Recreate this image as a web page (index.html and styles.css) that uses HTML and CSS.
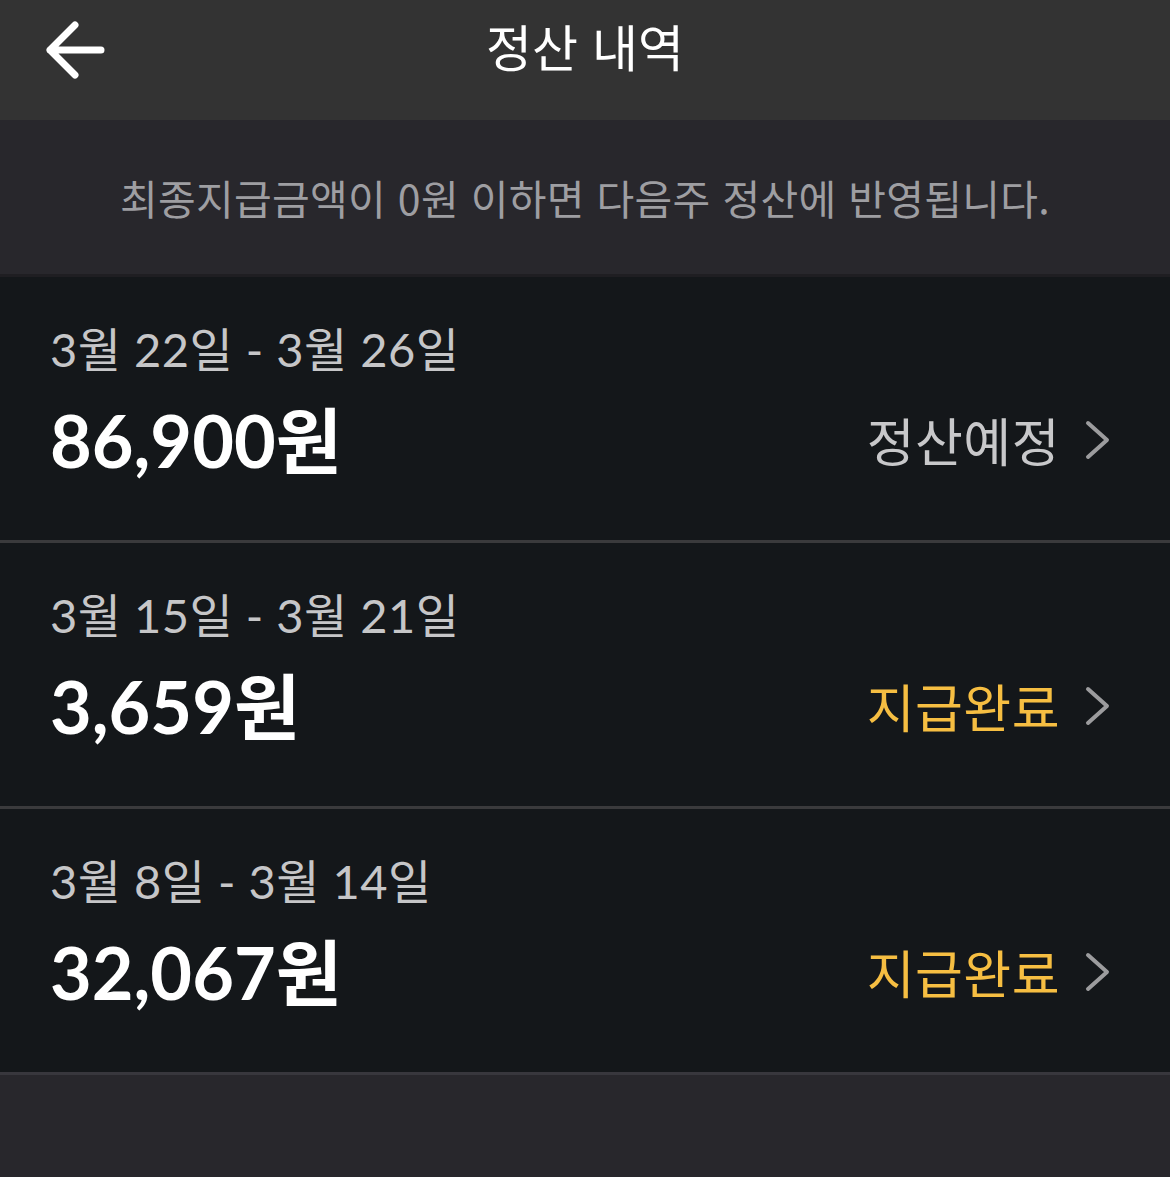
FILE: index.html
```html
<!DOCTYPE html>
<html lang="ko">
<head>
<meta charset="utf-8">
<title>정산 내역</title>
<link rel="stylesheet" href="styles.css">
</head>
<body>
<div class="app">
  <header class="topbar">
    <button class="back" aria-label="뒤로">
      <svg width="62" height="60" viewBox="0 0 62 60">
        <path d="M31 5 L6 30 L31 55 M6 30 L57 30" fill="none" stroke="#ffffff" stroke-width="7" stroke-linecap="round" stroke-linejoin="round"/>
      </svg>
    </button>
    <h1 class="title">정산 내역</h1>
  </header>
  <section class="notice">
    <p>최종지급금액이 0원 이하면 다음주 정산에 반영됩니다.</p>
  </section>
  <ul class="list">
    <li class="item">
      <div class="date">3월 22일 - 3월 26일</div>
      <div class="line">
        <span class="amount">86,900원</span>
        <span class="status pending">정산예정
          <svg class="chev" width="26" height="40" viewBox="0 0 26 40"><path d="M4 3 L23 20 L4 37" fill="none" stroke="#9c9c9e" stroke-width="4" stroke-linecap="round" stroke-linejoin="round"/></svg>
        </span>
      </div>
    </li>
    <li class="item">
      <div class="date">3월 15일 - 3월 21일</div>
      <div class="line">
        <span class="amount">3,659원</span>
        <span class="status done">지급완료
          <svg class="chev" width="26" height="40" viewBox="0 0 26 40"><path d="M4 3 L23 20 L4 37" fill="none" stroke="#9c9c9e" stroke-width="4" stroke-linecap="round" stroke-linejoin="round"/></svg>
        </span>
      </div>
    </li>
    <li class="item">
      <div class="date">3월 8일 - 3월 14일</div>
      <div class="line">
        <span class="amount">32,067원</span>
        <span class="status done">지급완료
          <svg class="chev" width="26" height="40" viewBox="0 0 26 40"><path d="M4 3 L23 20 L4 37" fill="none" stroke="#9c9c9e" stroke-width="4" stroke-linecap="round" stroke-linejoin="round"/></svg>
        </span>
      </div>
    </li>
  </ul>
</div>
</body>
</html>
```
FILE: styles.css
```css
html, body {
  margin: 0;
  padding: 0;
  background: #28272c;
}
body {
  font-family: Lato, "Noto Sans CJK KR", sans-serif;
  width: 1170px;
  height: 1177px;
  overflow: hidden;
}
.app {
  display: flex;
  flex-direction: column;
}
.topbar {
  height: 120px;
  background: #333333;
  display: flex;
  align-items: center;
  justify-content: center;
  position: relative;
}
.back {
  position: absolute;
  left: 44px;
  top: 20px;
  padding: 0;
  border: 0;
  background: none;
  width: 62px;
  height: 60px;
  display: flex;
}
.title {
  margin: 0 0 30px 0;
  font-family: "Noto Sans CJK KR", sans-serif;
  font-weight: 400;
  font-size: 50px;
  line-height: 60px;
  color: #ffffff;
}
.notice {
  height: 154px;
  border-bottom: 3px solid #1f1e22;
  display: flex;
  align-items: center;
  justify-content: center;
}
.notice p {
  margin: 0;
  font-family: "Noto Sans CJK KR", sans-serif;
  font-size: 41px;
  line-height: 50px;
  color: #9e9ea2;
  letter-spacing: 0.3px;
}
.list {
  list-style: none;
  margin: 0;
  padding: 0;
}
.item {
  box-sizing: border-box;
  background: #14171a;
  border-bottom: 3px solid #3a3a3c;
  padding: 42px 60px 0 50px;
  height: 266px;
}
.item:last-child {
  border-bottom-color: #38373d;
}
.date {
  font-size: 47px;
  line-height: 60px;
  color: #c6c6c8;
  letter-spacing: 0.5px;
  font-family: Lato, "Noto Sans CJK KR", sans-serif;
}
.line {
  margin-top: 21px;
  height: 80px;
  display: flex;
  align-items: center;
  justify-content: space-between;
}
.amount {
  font-size: 72px;
  line-height: 80px;
  font-weight: 700;
  color: #ffffff;
  font-family: Lato, "Noto Sans CJK KR", sans-serif;
}
.status {
  display: flex;
  align-items: center;
  gap: 24px;
  font-family: "Noto Sans CJK KR", sans-serif;
  font-size: 52px;
  line-height: 60px;
  letter-spacing: 0.5px;
}
.pending {
  color: #c8c8ca;
}
.done {
  color: #f6be42;
}
.chev {
  display: block;
}
```
